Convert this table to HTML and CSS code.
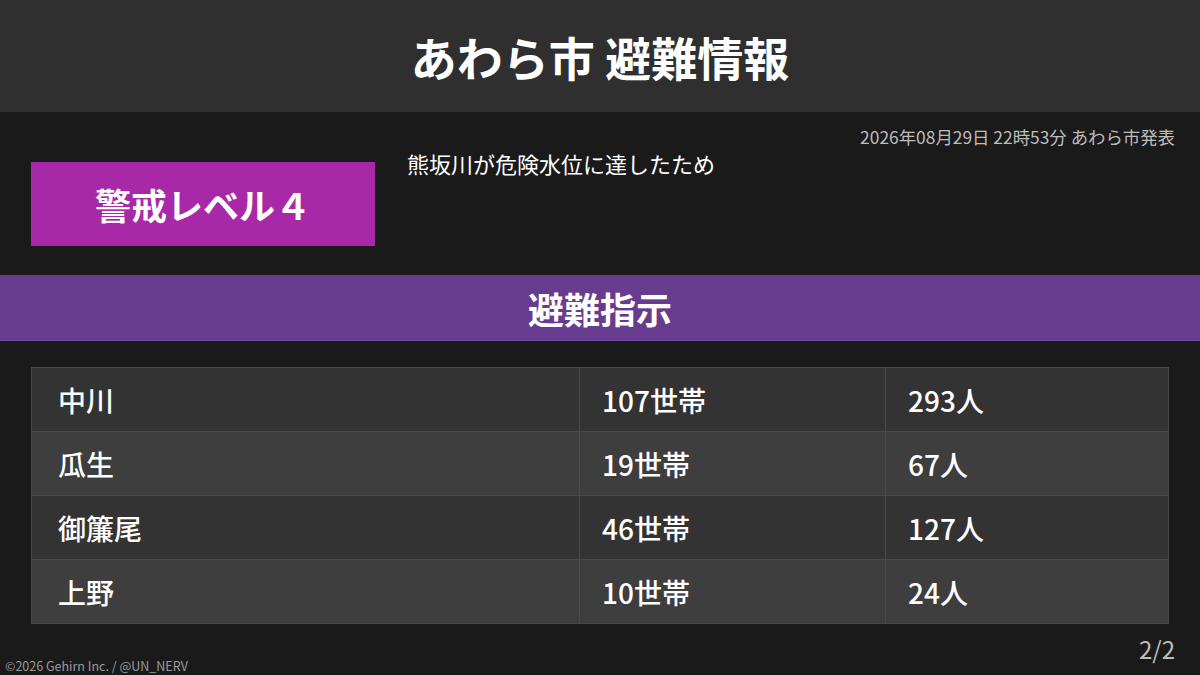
FILE: index.html
```html
<!DOCTYPE html>
<html lang="ja">
<head>
<meta charset="utf-8">
<link rel="stylesheet" href="styles.css">
</head>
<body>
<div class="page">
  <header class="header">あわら市 避難情報</header>
  <section class="info">
    <div class="date">2026年08月29日 22時53分 あわら市発表</div>
    <div class="info-row">
      <div class="level">警戒レベル４</div>
      <div class="reason">熊坂川が危険水位に達したため</div>
    </div>
  </section>
  <div class="band">避難指示</div>
  <div class="table">
    <div class="row odd"><div class="c c1">中川</div><div class="c c2">107世帯</div><div class="c c3">293人</div></div>
    <div class="row even"><div class="c c1">瓜生</div><div class="c c2">19世帯</div><div class="c c3">67人</div></div>
    <div class="row odd"><div class="c c1">御簾尾</div><div class="c c2">46世帯</div><div class="c c3">127人</div></div>
    <div class="row even"><div class="c c1">上野</div><div class="c c2">10世帯</div><div class="c c3">24人</div></div>
  </div>
  <div class="footer">
    <div class="copy">©2026 Gehirn Inc. / @UN_NERV</div>
    <div class="pager">2/2</div>
  </div>
</div>
</body>
</html>
```
FILE: styles.css
```css
html, body {
  margin: 0;
  padding: 0;
  background: #1a1a1a;
}
body {
  font-family: "Noto Sans CJK JP", "Noto Sans", sans-serif;
  color: #fff;
}
.page {
  width: 1200px;
  height: 675px;
  display: flex;
  flex-direction: column;
  overflow: hidden;
}
.header {
  height: 112px;
  background: #2f2f2f;
  display: flex;
  align-items: center;
  justify-content: center;
  font-size: 46px;
  font-weight: 700;
  line-height: 1;
}
.info {
  height: 163px;
  display: flex;
  flex-direction: column;
  padding: 0 25px 0 31px;
}
.date {
  align-self: flex-end;
  margin-top: 14px;
  font-size: 17.4px;
  line-height: 22px;
  color: #bdbdbd;
}
.info-row {
  display: flex;
  align-items: flex-start;
}
.level {
  width: 344px;
  height: 84px;
  margin-top: 14px;
  background: #a829a8;
  display: flex;
  align-items: center;
  justify-content: center;
  font-size: 36px;
  font-weight: 700;
}
.reason {
  margin-left: 32px;
  margin-top: 0;
  font-size: 22px;
  line-height: 30px;
}
.band {
  height: 65px;
  background: #673c8e;
  border-bottom: 1px solid #7a4aa3;
  display: flex;
  align-items: center;
  justify-content: center;
  font-size: 36px;
  font-weight: 700;
  line-height: 1;
}
.table {
  margin: 26px 31px 0 31px;
  width: 1138px;
  border: 1px solid #474747;
  box-sizing: border-box;
  display: flex;
  flex-direction: column;
}
.row {
  display: grid;
  grid-template-columns: 547px 306px 1fr;
  height: 64px;
  box-sizing: border-box;
}
.row:first-child {
  height: 63px;
}
.row + .row {
  border-top: 1px solid #4a4a4a;
}
.row.odd { background: #333333; }
.row.even { background: #3e3e3e; }
.c {
  display: flex;
  align-items: center;
  padding-left: 26px;
  font-size: 28px;
  font-weight: 500;
}
.c + .c {
  border-left: 1px solid #4a4a4a;
  padding-left: 22px;
}
.footer {
  flex: 1;
  display: flex;
  justify-content: space-between;
  align-items: flex-end;
  padding: 0 25px 0 5px;
}
.copy {
  font-size: 12.5px;
  color: #9a9a9a;
  line-height: 16px;
  margin-bottom: 1px;
}
.pager {
  font-size: 24px;
  color: #bdbdbd;
  line-height: 28px;
  margin-bottom: 12px;
}
```
